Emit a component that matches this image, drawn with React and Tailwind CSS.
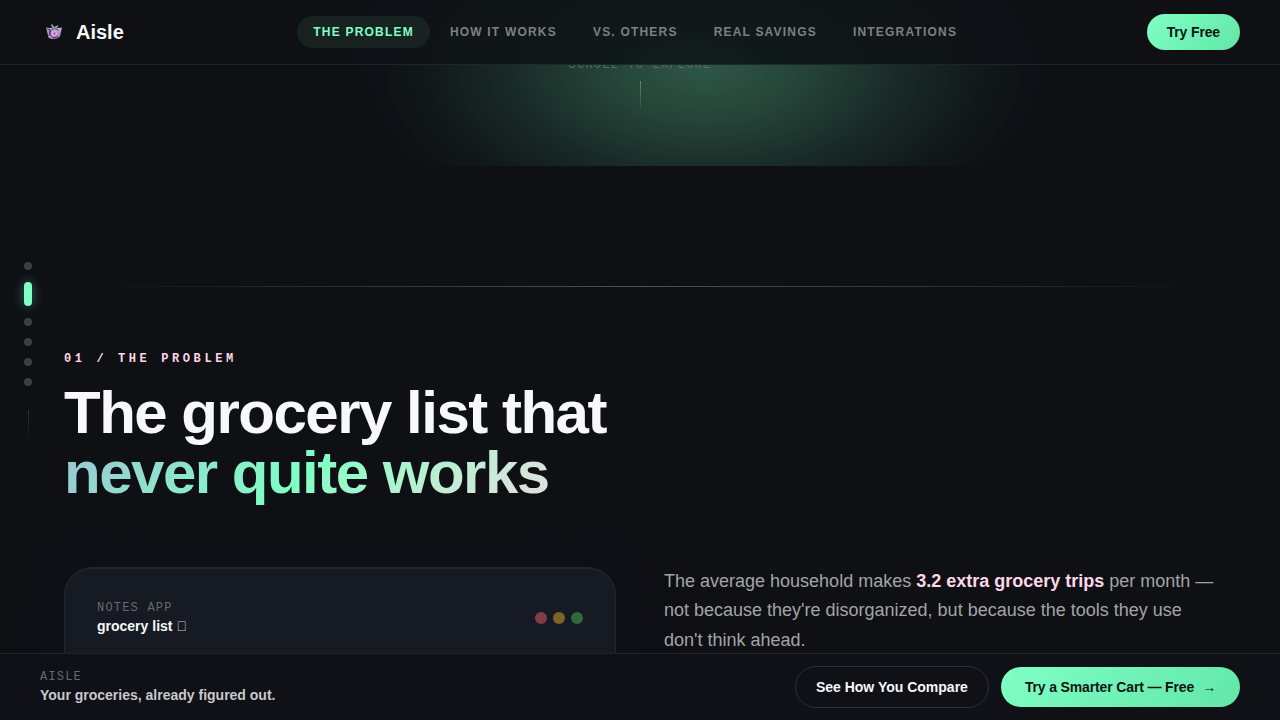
/*
	Name: App.jsx
	Description: Aisle landing page, top nav, problem section and sticky call to action
*/

const NAV_LINKS = [
	{ label: 'The Problem', href: '#problem', active: true },
	{ label: 'How It Works', href: '#how' },
	{ label: 'Vs. Others', href: '#compare' },
	{ label: 'Real Savings', href: '#savings' },
	{ label: 'Integrations', href: '#integrations' },
];

const SECTIONS = ['Intro', 'The Problem', 'How It Works', 'Vs. Others', 'Real Savings', 'Integrations'];

// Basket logo with a swirl in the middle
function Logo() {
	return (
		<svg viewBox="0 0 28 28" className="size-7" aria-hidden="true">
			<defs>
				<linearGradient id="basket" x1="0" y1="0" x2="1" y2="1">
					<stop offset="0" stopColor="#8f98c0" />
					<stop offset="0.5" stopColor="#c9a3d8" />
					<stop offset="1" stopColor="#8a6ab0" />
				</linearGradient>
			</defs>
			<path d="M6 9.5 L10 10 L14 9 L18 10 L22 9.5 L20 18.5 Q14 23 8.5 19.5 Z" fill="url(#basket)" />
			<path d="M7.5 11 L10 12 L9 18" fill="none" stroke="#3c3c66" strokeWidth="1" />
			<path d="M18.5 13 A4.5 4.5 0 1 0 18 18" fill="none" stroke="#4a2c62" strokeWidth="1" />
			<circle cx="14.5" cy="15.5" r="2.5" fill="#e0a8d0" />
			<circle cx="14.5" cy="15.5" r="1" fill="#7a4a80" />
			<path d="M11.5 6.5 L14 10 L18 8" fill="none" stroke="#7ab5b8" strokeWidth="1.5" />
		</svg>
	);
}

function Header() {
	return (
		<header className="flex h-[65px] shrink-0 items-center justify-between border-b border-white/8 bg-[radial-gradient(ellipse_360px_160px_at_54%_100%,#111c1c,#0e1014)] px-10">
			<a href="#top" className="flex items-center gap-2 text-xl font-bold text-[#f8f8fc]">
				<Logo />
				Aisle
			</a>
			<nav className="flex gap-1">
				{NAV_LINKS.map((link) => (
					<a
						key={link.label}
						href={link.href}
						className={`rounded-full px-4 py-2 text-xs font-bold tracking-widest uppercase ${
							link.active ? 'bg-[#182321] text-[#7fffc4]' : 'text-[#7d8083]'
						}`}
					>
						{link.label}
					</a>
				))}
			</nav>
			<button type="button" className="h-9 rounded-full bg-linear-135 from-[#7fffc4] to-[#62e6a9] px-5 text-sm font-bold tracking-[-0.01em] text-[#0d1512]">
				Try Free
			</button>
		</header>
	);
}

function SideDots() {
	return (
		<div className="absolute top-1/2 left-6 flex -translate-y-1/2 flex-col items-center gap-3">
			{SECTIONS.map((name) => (
				<button
					key={name}
					type="button"
					aria-label={name}
					className={`w-2 rounded-full ${
						name === 'The Problem' ? 'h-6 bg-[#7fffc4] shadow-[0_0_12px_rgba(127,255,196,0.4)]' : 'h-2 bg-[#3d3f43]'
					}`}
				/>
			))}
			<div className="h-[58px] w-px bg-[linear-gradient(to_bottom,transparent_20%,rgba(255,255,255,0.14)_22%,transparent_75%)]" />
		</div>
	);
}

// Tail end of the hero, its glow is cut off by the section edge
function HeroEnd() {
	return (
		<section className="flex h-[101px] flex-col items-center justify-end overflow-hidden bg-[radial-gradient(ellipse_340px_190px_at_55%_0%,#2e5747,#254338_30%,#192a26_58%,#111819_82%,transparent)]">
			<p className="font-['Liberation_Mono',monospace] text-xs tracking-widest text-[#4f6f63] uppercase">Scroll to explore</p>
			<div className="mt-2 mb-[53px] h-8 w-px shrink-0 bg-linear-to-b from-[#5f8576] to-transparent" />
		</section>
	);
}

function NotesCard() {
	return (
		<div className="h-80 rounded-[28px] border border-[#22252a] bg-[#161a22] p-8 shadow-[inset_0_1px_0_rgba(255,255,255,0.06),0_0_60px_rgba(20,20,48,0.4)]">
			<div className="flex items-center justify-between">
				<div>
					<p className="font-['Liberation_Mono',monospace] text-xs tracking-widest text-[#66696f] uppercase">Notes app</p>
					<h3 className="text-sm font-bold text-[#f8f8fc]">
						grocery list <span className="font-normal text-[#c8c9cc]">{'\uE000'}</span>
					</h3>
				</div>
				<div className="flex gap-1.5">
					<span className="size-3 rounded-full bg-[#7f3f49]" />
					<span className="size-3 rounded-full bg-[#7d6428]" />
					<span className="size-3 rounded-full bg-[#2f6a3c]" />
				</div>
			</div>
		</div>
	);
}

function Problem() {
	return (
		<section id="problem" className="px-16 pt-[120px]">
			<hr className="h-px border-0 bg-[linear-gradient(to_right,transparent_2%,#1f2627_16%,#3a5a4f_50%,#1f2627_86%,transparent_99%)]" />
			<p className="mt-16 font-['Liberation_Mono',monospace] text-xs font-bold tracking-[0.3em] text-[#ffd6e8] uppercase">
				01 / The Problem
			</p>
			<h2 className="mt-4 text-6xl leading-none font-bold tracking-tight text-[#f8f8fc]">
				The grocery list that
				<br />
				<span className="bg-linear-135 from-[#9ac4d4] via-[#7fffc4] to-[#e6dce2] bg-clip-text text-transparent">
					never quite works
				</span>
			</h2>
			<div className="mt-16 grid grid-cols-2 gap-12">
				<NotesCard />
				<p className="text-lg leading-relaxed text-[#a3a4a8]">
					The average household makes <strong className="font-bold text-[#ffd6e8]">3.2 extra grocery trips</strong> per month —
					not because they're disorganized, but because the tools they use don't think ahead.
				</p>
			</div>
		</section>
	);
}

function BottomBar() {
	return (
		<footer className="flex h-[67px] shrink-0 items-center justify-between border-t border-white/8 bg-[#0f1116] px-10">
			<div>
				<p className="font-['Liberation_Mono',monospace] text-xs tracking-widest text-[#66696f] uppercase">Aisle</p>
				<p className="text-sm font-bold text-[#c8c9cc]">Your groceries, already figured out.</p>
			</div>
			<div className="flex items-center gap-3">
				<button type="button" className="rounded-full border border-[#2d3034] px-5 py-2.5 text-sm font-bold text-[#f8f8fc]">
					See How You Compare
				</button>
				<button
					type="button"
					className="flex items-center gap-2 rounded-full bg-linear-135 from-[#7fffc4] to-[#62e6a9] px-6 py-2.5 text-sm font-bold tracking-[-0.01em] text-[#0d1512]"
				>
					Try a Smarter Cart — Free
					<span>→</span>
				</button>
			</div>
		</footer>
	);
}

export default function App() {
	return (
		<div className="flex h-screen flex-col overflow-hidden bg-[#0e1014] font-['Liberation_Sans',Arial,sans-serif]">
			<Header />
			<main className="relative flex-1 overflow-hidden">
				<HeroEnd />
				<Problem />
				<SideDots />
			</main>
			<BottomBar />
		</div>
	);
}
